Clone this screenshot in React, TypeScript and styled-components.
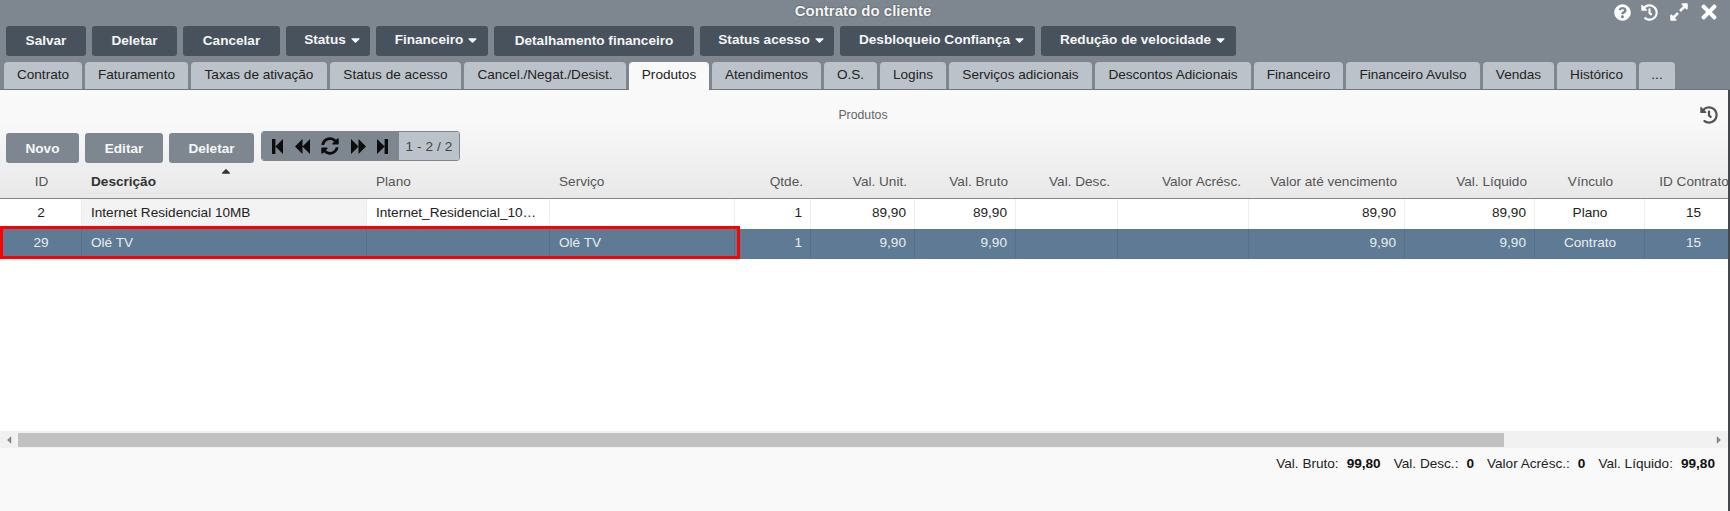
import React from "react";
import styled, { createGlobalStyle } from "styled-components";
import { FaQuestionCircle, FaHistory, FaExpandAlt, FaTimes, FaSyncAlt, FaCaretDown, FaCaretUp, FaCaretLeft, FaCaretRight } from "react-icons/fa";

const Global = createGlobalStyle`
  html, body { margin: 0; padding: 0; background: #f9f9f9; }
  body { font-family: "Liberation Sans", Arial, sans-serif; font-size: 13.6px; }
`;

const Page = styled.div`
  width: 1730px; height: 511px; display: flex; flex-direction: column; overflow: hidden; background: #f9f9f9;
`;
const Head = styled.header`
  background: #7e8790; height: 90px; display: flex; flex-direction: column; box-sizing: border-box;
`;
const TitleBar = styled.div`
  height: 26px; display: grid; grid-template-columns: 1fr auto 1fr; align-items: center; padding-right: 6px;
`;
const Title = styled.h1`
  grid-column: 2; margin: 0; font-size: 15px; font-weight: 700; color: #f4f5f6; line-height: 22px;
  text-shadow: 0 0 2px #444; position: relative; top: -2px; left: 1px;
`;
const WindowIcons = styled.div`
  grid-column: 3; justify-self: end; display: flex; align-items: center; color: #fff; margin-top: -2px;
`;
const IconSlot = styled.span<{ $w: number }>`
  width: ${(p) => p.$w}px; display: flex; justify-content: center;
  svg { display: block; flex: none; }
`;
const Toolbar = styled.div`
  display: flex; gap: 6px; padding-left: 6px; height: 30px;
`;
const DarkButton = styled.button<{ $w: number; $caret?: boolean }>`
  width: ${(p) => p.$w}px; height: 30px; border: 0; border-radius: 3px; background: #48525d; color: #f4f5f6;
  font: 700 13.6px "Liberation Sans", Arial, sans-serif; display: flex; align-items: center; justify-content: center; gap: 4px;
  padding: ${(p) => (p.$caret ? "0 0 3px 9px" : "0 0 1px 0")}; white-space: nowrap; box-sizing: border-box;
  svg { width: 11px; height: 14px; }
`;
const Tabs = styled.nav`
  display: flex; gap: 3px; padding-left: 4px; margin-top: 6px; height: 28px; border-bottom: 1px solid #6f7882; box-sizing: border-box;
`;
const Tab = styled.div<{ $w: number; $active?: boolean }>`
  width: ${(p) => p.$w}px; height: ${(p) => (p.$active ? "28px" : "27px")}; line-height: 26px; text-align: center;
  border-radius: 4px 4px 0 0; font-size: 13.6px; box-sizing: border-box;
  background: ${(p) => (p.$active ? "#f9f9f9" : "#bcc2c9")}; color: #222; white-space: nowrap;
`;
const Panel = styled.main`
  flex: 1; display: flex; flex-direction: column; min-height: 0; background: #f9f9f9;
  border-right: 2px solid #44484c; overflow: hidden;
`;
const Upper = styled.div`
  height: 109px; background: linear-gradient(#f9f9f9 0, #f9f9f9 30px, #e8e8e8 100%); display: flex; flex-direction: column;
  border-bottom: 1px solid #7e8790; box-sizing: border-box;
`;
const PanelTitle = styled.div`
  height: 41px; display: grid; grid-template-columns: 1fr auto 1fr; align-items: center; padding-top: 8px; box-sizing: border-box; padding-right: 10px;
`;
const PanelName = styled.span`
  grid-column: 2; font-size: 12.3px; color: #666; position: relative; left: 4px;
`;
const PanelHistory = styled.span`
  grid-column: 3; justify-self: end; color: #555; display: flex;
`;
const Actions = styled.div`
  display: flex; align-items: flex-start; padding-left: 6px; gap: 6px; height: 32px;
`;
const GrayButton = styled.button<{ $w: number }>`
  width: ${(p) => p.$w}px; height: 30px; margin-top: 2px; border: 0; border-radius: 3px; background: #7e8790; color: #f6f7f8;
  font: 700 13.6px "Liberation Sans", Arial, sans-serif; padding: 0;
`;
const Pager = styled.div`
  display: flex; height: 30px; margin-left: 1px; width: 199px; border-radius: 3px; overflow: hidden; box-sizing: border-box; border: 1px solid #7e8790;
`;
const PagerIcons = styled.div`
  width: 137px; background: #7e8790; display: flex; align-items: center; color: #0c0c0c; gap: 11.5px; padding-left: 10px; box-sizing: border-box;
  svg { display: block; flex: none; }
`;
const PagerText = styled.div`
  flex: 1; background: #bcc2c9; color: #444; font-size: 13.6px; letter-spacing: 0.1px; display: flex; align-items: center; justify-content: center;
`;
const cols = "82px 285px 183px 185px 76px 104px 101px 102px 131px 156px 130px 110px 97px";
const Row = styled.div<{ $sel?: boolean }>`
  display: grid; grid-template-columns: ${cols}; height: 30px; box-sizing: border-box; width: 1742px;
  background: ${(p) => (p.$sel ? "#5e7a94" : "#fff")}; color: ${(p) => (p.$sel ? "#e9edf1" : "#222")};
`;
const HeaderRow = styled.div`
  display: grid; grid-template-columns: ${cols}; width: 1742px; height: 33px; align-items: center; color: #444; position: relative;
`;
const SortCaret = styled.span`
  position: absolute; left: 219px; top: 1px; color: #333; line-height: 0;
`;
const HeadCell = styled.div<{ $align?: string; $bold?: boolean }>`
  padding: 0 8px 0 9px; text-align: ${(p) => p.$align || "left"}; font-weight: ${(p) => (p.$bold ? 700 : 400)};
  white-space: nowrap; color: ${(p) => (p.$bold ? "#333" : "#555")}; margin-top: 4px;
`;
const Cell = styled.div<{ $align?: string; $sel?: boolean; $sorted?: boolean }>`
  padding: 0 8px 0 9px; line-height: 28px; text-align: ${(p) => p.$align || "left"}; white-space: nowrap;
  border-right: 1px solid ${(p) => (p.$sel ? "#56708a" : "#eee")};
  background: ${(p) => (p.$sorted ? "#f3f3f3" : "transparent")};
`;
const TableBody = styled.div`
  flex: 1; min-height: 0; background: #fff; position: relative; overflow: hidden;
`;
const RedMark = styled.div`
  position: absolute; left: 0; top: 27px; width: 740px; height: 33px; border: 3px solid #f00; box-sizing: border-box;
`;
const ScrollTrack = styled.div`
  height: 17px; background: #f1f1f1; display: flex; align-items: center; flex: none; color: #888;
`;
const ScrollArrow = styled.span`
  width: 18px; display: flex; justify-content: center; svg { display: block; }
`;
const ScrollRail = styled.div`
  flex: 1; height: 14px;
`;
const ScrollThumb = styled.div`
  width: 1486px; height: 14px; background: #c1c1c1;
`;
const Totals = styled.footer`
  height: 63px; box-sizing: border-box; display: flex; justify-content: flex-end; padding: 8px 13px 0 0; gap: 13px; color: #222; line-height: 16px;
`;
const Total = styled.span`
  display: flex; gap: 8px;
`;
const TotalValue = styled.b`
  color: #111;
`;

const StepIcon = ({ flip }: { flip?: boolean }) => (
  <svg width="11" height="15" viewBox="0 0 11 15" style={flip ? { transform: "scaleX(-1)" } : undefined}>
    <path d="M0 0h3.4v15H0zM3.4 7.5L11 0v15z" fill="currentColor" />
  </svg>
);
const SkipIcon = ({ flip }: { flip?: boolean }) => (
  <svg width="15" height="15" viewBox="0 0 15 15" style={flip ? { transform: "scaleX(-1)" } : undefined}>
    <path d="M0 7.5L7.5 0v15zM7.5 7.5L15 0v15z" fill="currentColor" />
  </svg>
);

const buttons: [string, number, boolean][] = [
  ["Salvar", 80, false], ["Deletar", 85, false], ["Cancelar", 97, false], ["Status", 84, true], ["Financeiro", 112, true],
  ["Detalhamento financeiro", 200, false], ["Status acesso", 134, true], ["Desbloqueio Confiança", 195, true], ["Redução de velocidade", 195, true],
];
const tabs: [string, number][] = [["Contrato",78],["Faturamento",103],["Taxas de ativação",136],["Status de acesso",131],["Cancel./Negat./Desist.",162],["Produtos",80],["Atendimentos",109],["O.S.",53],["Logins",66],["Serviços adicionais",143],["Descontos Adicionais",156],["Financeiro",89],["Financeiro Avulso",134],["Vendas",71],["Histórico",79],["...",36]];
const headers: [string, string][] = [["ID","center"],["Descrição","left"],["Plano","left"],["Serviço","left"],["Qtde.","right"],["Val. Unit.","right"],["Val. Bruto","right"],["Val. Desc.","right"],["Valor Acrésc.","right"],["Valor até vencimento","right"],["Val. Líquido","right"],["Vínculo","center"],["ID Contrato","center"]];
const rows = [
  ["2","Internet Residencial 10MB","Internet_Residencial_10…","","1","89,90","89,90","","","89,90","89,90","Plano","15"],
  ["29","Olé TV","","Olé TV","1","9,90","9,90","","","9,90","9,90","Contrato","15"],
];
const totals = [["Val. Bruto:","99,80"],["Val. Desc.:","0"],["Valor Acrésc.:","0"],["Val. Líquido:","99,80"]];

export default function App() {
  return (
    <Page>
      <Global />
      <Head>
        <TitleBar>
          <Title>Contrato do cliente</Title>
          <WindowIcons>
            <IconSlot $w={24}><FaQuestionCircle size={17} /></IconSlot>
            <IconSlot $w={30}><FaHistory size={17} /></IconSlot>
            <IconSlot $w={30}><FaExpandAlt size={20} /></IconSlot>
            <IconSlot $w={30}><FaTimes size={22} /></IconSlot>
          </WindowIcons>
        </TitleBar>
        <Toolbar>
          {buttons.map(([t, w, c]) => (
            <DarkButton key={t} $w={w} $caret={c}>{t}{c && <FaCaretDown />}</DarkButton>
          ))}
        </Toolbar>
        <Tabs>
          {tabs.map(([t, w]) => <Tab key={t} $w={w} $active={t === "Produtos"}>{t}</Tab>)}
        </Tabs>
      </Head>
      <Panel>
        <Upper>
          <PanelTitle>
            <PanelName>Produtos</PanelName>
            <PanelHistory><FaHistory size={18} /></PanelHistory>
          </PanelTitle>
          <Actions>
            <GrayButton $w={73}>Novo</GrayButton>
            <GrayButton $w={78}>Editar</GrayButton>
            <GrayButton $w={85}>Deletar</GrayButton>
            <Pager>
              <PagerIcons>
                <StepIcon />
                <SkipIcon />
                <FaSyncAlt size={18} />
                <SkipIcon flip />
                <StepIcon flip />
              </PagerIcons>
              <PagerText>1 - 2 / 2</PagerText>
            </Pager>
          </Actions>
          <HeaderRow>
            <SortCaret><FaCaretUp size={14} /></SortCaret>
            {headers.map(([h, a]) => <HeadCell key={h} $align={a} $bold={h === "Descrição"}>{h}</HeadCell>)}
          </HeaderRow>
        </Upper>
        <TableBody>
          {rows.map((r, i) => (
            <Row key={i} $sel={i === 1}>
              {r.map((c, j) => (
                <Cell key={j} $sel={i === 1} $sorted={i === 0 && j === 1} $align={headers[j][1]}>{c}</Cell>
              ))}
            </Row>
          ))}
          <RedMark />
        </TableBody>
        <ScrollTrack>
          <ScrollArrow><FaCaretLeft size={12} /></ScrollArrow>
          <ScrollRail><ScrollThumb /></ScrollRail>
          <ScrollArrow><FaCaretRight size={12} /></ScrollArrow>
        </ScrollTrack>
        <Totals>
          {totals.map(([l, v]) => <Total key={l}><span>{l}</span><TotalValue>{v}</TotalValue></Total>)}
        </Totals>
      </Panel>
    </Page>
  );
}
